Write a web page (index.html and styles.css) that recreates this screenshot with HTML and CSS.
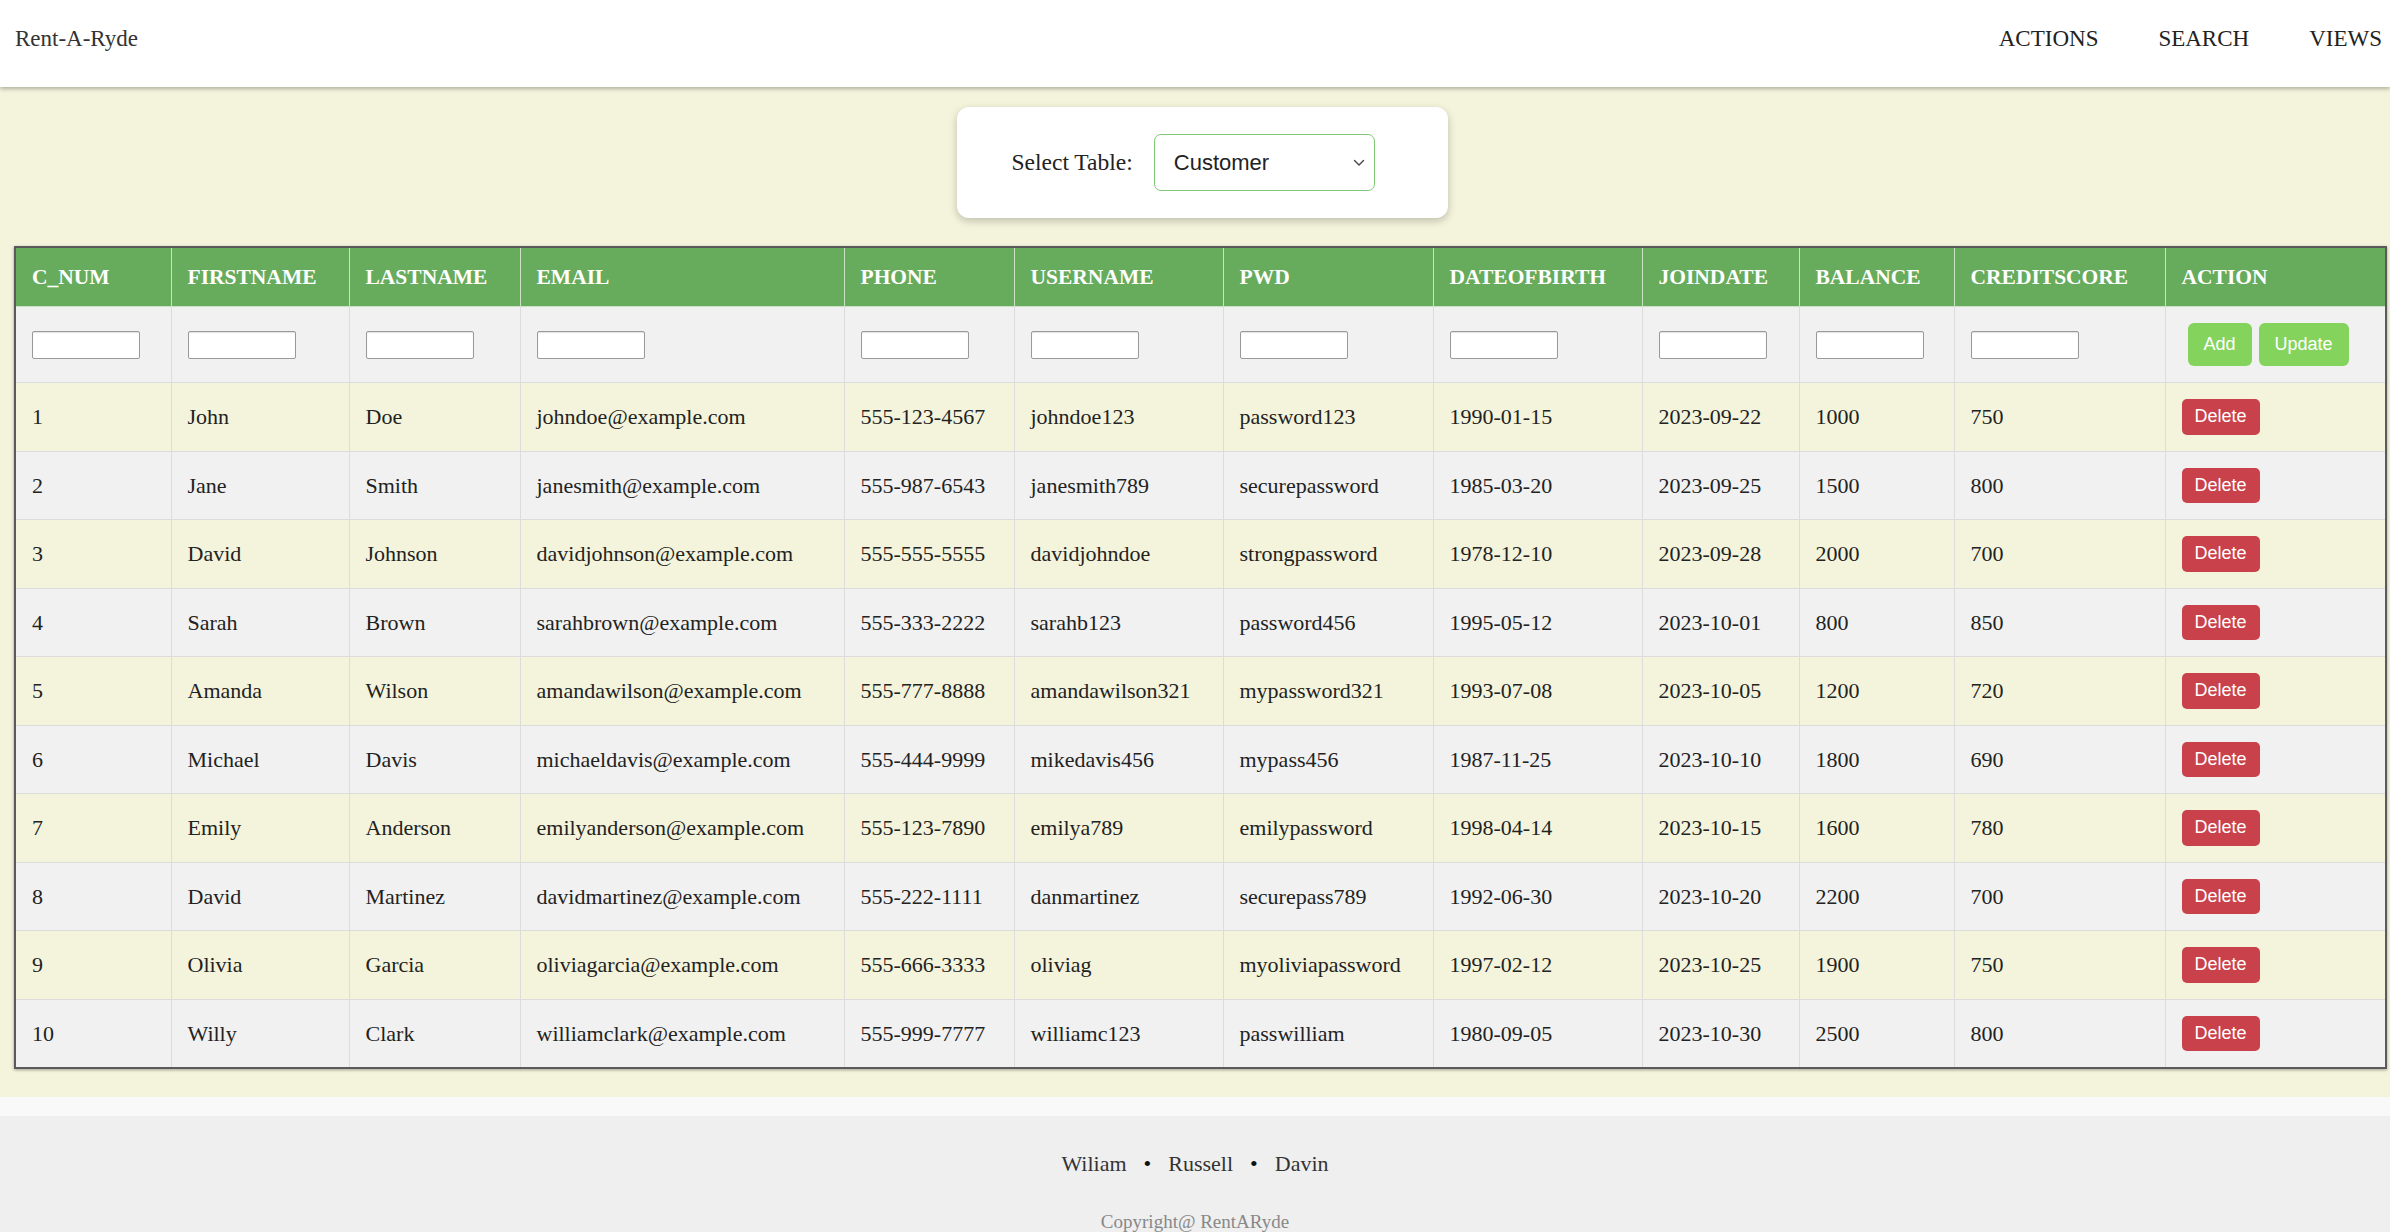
FILE: index.html
```html
<!DOCTYPE html>
<html lang="en">
<head>
<meta charset="utf-8">
<title>Rent-A-Ryde</title>
<link rel="stylesheet" href="styles.css">
</head>
<body>
<header class="topbar">
  <div class="brand">Rent-A-Ryde</div>
  <nav class="nav">
    <a class="nav-link">ACTIONS</a>
    <a class="nav-link">SEARCH</a>
    <a class="nav-link">VIEWS</a>
  </nav>
</header>

<main class="main">
  <div class="picker">
    <label class="picker-label">Select Table:</label>
    <div class="select-wrap">
      <select class="select"><option>Customer</option></select>
      <svg class="chev" width="12" height="8" viewBox="0 0 12 8"><path d="M1.5 1.5 L6 6 L10.5 1.5" fill="none" stroke="#444" stroke-width="1.4" stroke-linecap="round" stroke-linejoin="round"/></svg>
    </div>
  </div>

  <table class="grid">
    <colgroup>
      <col class="w1"><col class="w2"><col class="w3"><col class="w4"><col class="w5"><col class="w6">
      <col class="w7"><col class="w8"><col class="w9"><col class="w10"><col class="w11"><col class="w12">
    </colgroup>
    <thead>
      <tr>
        <th>C_NUM</th><th>FIRSTNAME</th><th>LASTNAME</th><th>EMAIL</th><th>PHONE</th><th>USERNAME</th>
        <th>PWD</th><th>DATEOFBIRTH</th><th>JOINDATE</th><th>BALANCE</th><th>CREDITSCORE</th><th>ACTION</th>
      </tr>
    </thead>
    <tbody>
      <tr class="input-row">
        <td><input class="cell-input" type="text"></td>
        <td><input class="cell-input" type="text"></td>
        <td><input class="cell-input" type="text"></td>
        <td><input class="cell-input" type="text"></td>
        <td><input class="cell-input" type="text"></td>
        <td><input class="cell-input" type="text"></td>
        <td><input class="cell-input" type="text"></td>
        <td><input class="cell-input" type="text"></td>
        <td><input class="cell-input" type="text"></td>
        <td><input class="cell-input" type="text"></td>
        <td><input class="cell-input" type="text"></td>
        <td><div class="actions"><button class="btn btn-green">Add</button><button class="btn btn-green">Update</button></div></td>
      </tr>
      <tr><td>1</td><td>John</td><td>Doe</td><td>johndoe@example.com</td><td>555-123-4567</td><td>johndoe123</td><td>password123</td><td>1990-01-15</td><td>2023-09-22</td><td>1000</td><td>750</td><td><button class="btn btn-red">Delete</button></td></tr>
      <tr><td>2</td><td>Jane</td><td>Smith</td><td>janesmith@example.com</td><td>555-987-6543</td><td>janesmith789</td><td>securepassword</td><td>1985-03-20</td><td>2023-09-25</td><td>1500</td><td>800</td><td><button class="btn btn-red">Delete</button></td></tr>
      <tr><td>3</td><td>David</td><td>Johnson</td><td>davidjohnson@example.com</td><td>555-555-5555</td><td>davidjohndoe</td><td>strongpassword</td><td>1978-12-10</td><td>2023-09-28</td><td>2000</td><td>700</td><td><button class="btn btn-red">Delete</button></td></tr>
      <tr><td>4</td><td>Sarah</td><td>Brown</td><td>sarahbrown@example.com</td><td>555-333-2222</td><td>sarahb123</td><td>password456</td><td>1995-05-12</td><td>2023-10-01</td><td>800</td><td>850</td><td><button class="btn btn-red">Delete</button></td></tr>
      <tr><td>5</td><td>Amanda</td><td>Wilson</td><td>amandawilson@example.com</td><td>555-777-8888</td><td>amandawilson321</td><td>mypassword321</td><td>1993-07-08</td><td>2023-10-05</td><td>1200</td><td>720</td><td><button class="btn btn-red">Delete</button></td></tr>
      <tr><td>6</td><td>Michael</td><td>Davis</td><td>michaeldavis@example.com</td><td>555-444-9999</td><td>mikedavis456</td><td>mypass456</td><td>1987-11-25</td><td>2023-10-10</td><td>1800</td><td>690</td><td><button class="btn btn-red">Delete</button></td></tr>
      <tr><td>7</td><td>Emily</td><td>Anderson</td><td>emilyanderson@example.com</td><td>555-123-7890</td><td>emilya789</td><td>emilypassword</td><td>1998-04-14</td><td>2023-10-15</td><td>1600</td><td>780</td><td><button class="btn btn-red">Delete</button></td></tr>
      <tr><td>8</td><td>David</td><td>Martinez</td><td>davidmartinez@example.com</td><td>555-222-1111</td><td>danmartinez</td><td>securepass789</td><td>1992-06-30</td><td>2023-10-20</td><td>2200</td><td>700</td><td><button class="btn btn-red">Delete</button></td></tr>
      <tr><td>9</td><td>Olivia</td><td>Garcia</td><td>oliviagarcia@example.com</td><td>555-666-3333</td><td>oliviag</td><td>myoliviapassword</td><td>1997-02-12</td><td>2023-10-25</td><td>1900</td><td>750</td><td><button class="btn btn-red">Delete</button></td></tr>
      <tr><td>10</td><td>Willy</td><td>Clark</td><td>williamclark@example.com</td><td>555-999-7777</td><td>williamc123</td><td>passwilliam</td><td>1980-09-05</td><td>2023-10-30</td><td>2500</td><td>800</td><td><button class="btn btn-red">Delete</button></td></tr>
    </tbody>
  </table>
</main>

<div class="spacer"></div>

<footer class="footer">
  <p class="names"><span>Wiliam</span><span class="dot">•</span><span>Russell</span><span class="dot">•</span><span>Davin</span></p>
  <p class="copy">Copyright@ RentARyde</p>
</footer>
</body>
</html>
```

FILE: styles.css
```css
* { box-sizing: border-box; }

html, body {
  margin: 0;
  padding: 0;
}

body {
  font-family: "Liberation Serif", "Times New Roman", serif;
  color: #222;
  background: #f9f9f9;
}

.topbar {
  height: 87px;
  background: #fff;
  display: flex;
  align-items: center;
  justify-content: space-between;
  padding: 0 8px 10px 15px;
  box-shadow: 0 2px 4px rgba(0, 0, 0, 0.28);
  position: relative;
  z-index: 2;
}

.brand {
  font-size: 23px;
  color: #333;
}

.nav {
  display: flex;
  gap: 60px;
}

.nav-link {
  font-size: 23px;
  color: #222;
  text-decoration: none;
}

.main {
  background: #f4f4dc;
  padding: 20px 0 28px 14px;
}

.picker {
  width: 491px;
  margin: 0 auto 28px auto;
  background: #fff;
  border-radius: 12px;
  box-shadow: 0 3px 8px rgba(0, 0, 0, 0.22);
  padding: 27px 69px 27px 55px;
  display: flex;
  align-items: center;
}

.picker-label {
  font-size: 23.5px;
  color: #222;
  margin-right: 21px;
  white-space: nowrap;
}

.select-wrap {
  position: relative;
  width: 221px;
  height: 57px;
}

.select {
  appearance: none;
  -webkit-appearance: none;
  width: 221px;
  height: 57px;
  border: 1.5px solid #80c777;
  border-radius: 7px;
  background: #fff;
  font-family: "Liberation Sans", Arial, sans-serif;
  font-size: 22px;
  color: #222;
  padding: 0 0 0 19px;
}

.chev {
  position: absolute;
  right: 10px;
  top: 25px;
}

.grid {
  width: 2371px;
  table-layout: fixed;
  border-collapse: collapse;
  border: 2px solid #5a5a5a;
  box-shadow: 0 1px 3px rgba(0, 0, 0, 0.35);
  font-size: 22px;
  line-height: 25px;
}

.w1 { width: 156px; }
.w2 { width: 178px; }
.w3 { width: 171px; }
.w4 { width: 324px; }
.w5 { width: 170px; }
.w6 { width: 209px; }
.w7 { width: 210px; }
.w8 { width: 209px; }
.w9 { width: 157px; }
.w10 { width: 155px; }
.w11 { width: 211px; }
.w12 { width: 221px; }

.grid th,
.grid td {
  padding: 16px 16px;
  text-align: left;
  vertical-align: middle;
  border: 1px solid #dcdcdc;
  white-space: nowrap;
}

.grid th {
  background: #67ab5c;
  color: #fff;
  font-weight: bold;
  font-size: 21.5px;
  border-color: #c9e3c4;
  border-top: none;
  padding-top: 16.5px;
  padding-bottom: 16.5px;
}

.grid tbody tr:nth-child(odd) td { background: #f1f1f1; }
.grid tbody tr:nth-child(even) td { background: #f4f4dc; }

.grid td { color: #222; }

.cell-input {
  display: block;
  width: 108px;
  height: 28px;
  border: 1px solid #9a9a9a;
  border-radius: 2px;
  background: #fff;
  box-shadow: inset 0 1px 1px rgba(0, 0, 0, 0.12);
  margin: 0;
}

.actions {
  display: flex;
  gap: 7px;
  margin-left: 6px;
}

.btn {
  display: block;
  border: none;
  color: #fff;
  font-family: "Liberation Sans", Arial, sans-serif;
  font-size: 18px;
  line-height: 21px;
  cursor: pointer;
}

.btn-green {
  background: #84d35c;
  padding: 11px 16px;
  border-radius: 6px;
}

.btn-red {
  background: #c9414a;
  padding: 7px 13px;
  line-height: 21.5px;
  border-radius: 5px;
}

.spacer {
  height: 19px;
  background: #f9f9f9;
}

.footer {
  background: #efefef;
  padding: 35px 0 30px;
  text-align: center;
}

.names {
  margin: 0;
  font-size: 22px;
  line-height: 25px;
  color: #333;
}

.dot {
  margin: 0 17px;
  color: #111;
}

.copy {
  margin: 35px 0 0;
  font-size: 19px;
  color: #888;
}
```
